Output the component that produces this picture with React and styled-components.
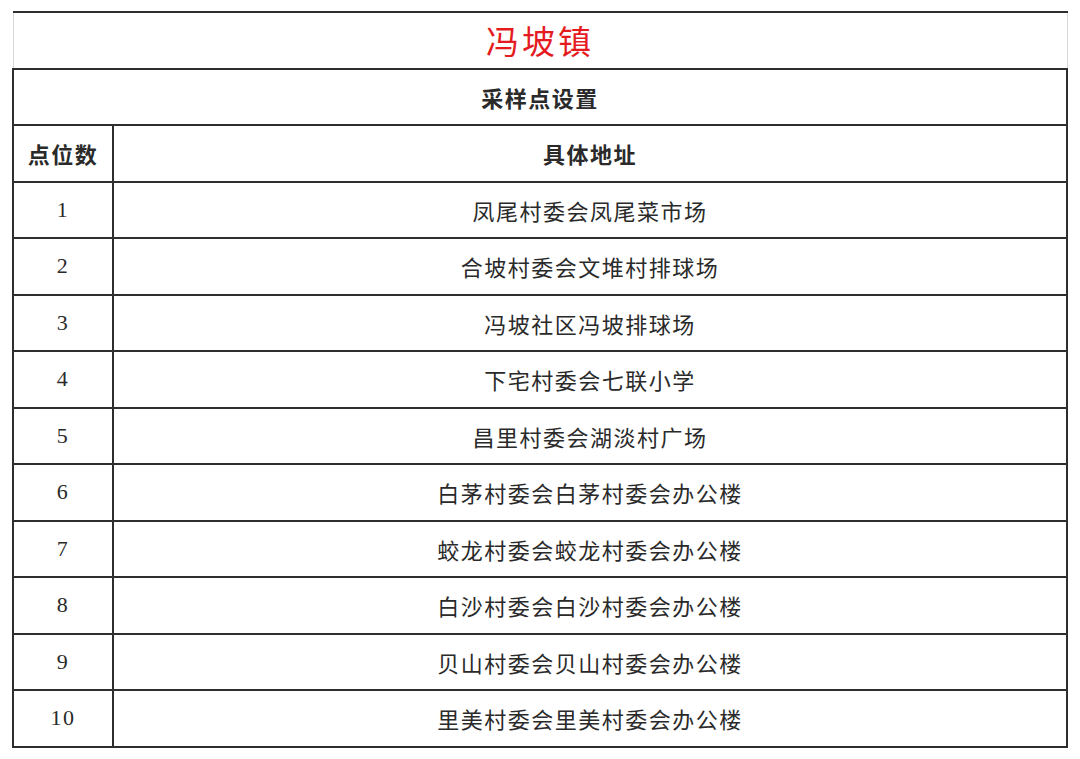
import React from 'react';
import styled, {createGlobalStyle} from 'styled-components';

const GlobalStyle = createGlobalStyle`
  body {
    margin: 0;
    background: #ffffff;
    font-family: "Noto Sans CJK SC", "Noto Sans", sans-serif;
  }
`;

const rows = [
  '凤尾村委会凤尾菜市场',
  '合坡村委会文堆村排球场',
  '冯坡社区冯坡排球场',
  '下宅村委会七联小学',
  '昌里村委会湖淡村广场',
  '白茅村委会白茅村委会办公楼',
  '蛟龙村委会蛟龙村委会办公楼',
  '白沙村委会白沙村委会办公楼',
  '贝山村委会贝山村委会办公楼',
  '里美村委会里美村委会办公楼',
];

const Page = styled.div`
  padding: 11px 12px 12px 12px;
`;

const Table = styled.table`
  width: 1056px;
  border-collapse: collapse;
  table-layout: fixed;
`;

const Row = styled.tr`
  height: 56.5px;
`;

const Cell = styled.td`
  border: 2px solid #2e2e2e;
  padding: 0;
  text-align: center;
  vertical-align: middle;
  color: #2a2a2a;
  font-size: 22px;
  letter-spacing: 1.5px;
  font-weight: ${p => (p.$bold ? 700 : 400)};
  font-family: ${p => (p.$serif
    ? '"Liberation Serif", "Noto Sans CJK SC", serif'
    : '"Noto Sans CJK SC", "Noto Sans", sans-serif')};
`;

const TitleCell = styled(Cell)`
  border-left-color: #d8d8d8;
  border-right-color: #d8d8d8;
  border-left-width: 1px;
  border-right-width: 1px;
  color: #e41b1f;
  font-size: 33px;
  letter-spacing: 3px;
`;

export default function App() {
  return (
    <Page>
      <GlobalStyle />
      <Table>
        <colgroup>
          <col style={{width: '100px'}} />
          <col />
        </colgroup>
        <tbody>
          <Row>
            <TitleCell colSpan={2}>冯坡镇</TitleCell>
          </Row>
          <Row>
            <Cell colSpan={2} $bold>采样点设置</Cell>
          </Row>
          <Row>
            <Cell $bold>点位数</Cell>
            <Cell $bold>具体地址</Cell>
          </Row>
          {rows.map((addr, i) => (
            <Row key={addr}>
              <Cell $serif>{i + 1}</Cell>
              <Cell>{addr}</Cell>
            </Row>
          ))}
        </tbody>
      </Table>
    </Page>
  );
}
